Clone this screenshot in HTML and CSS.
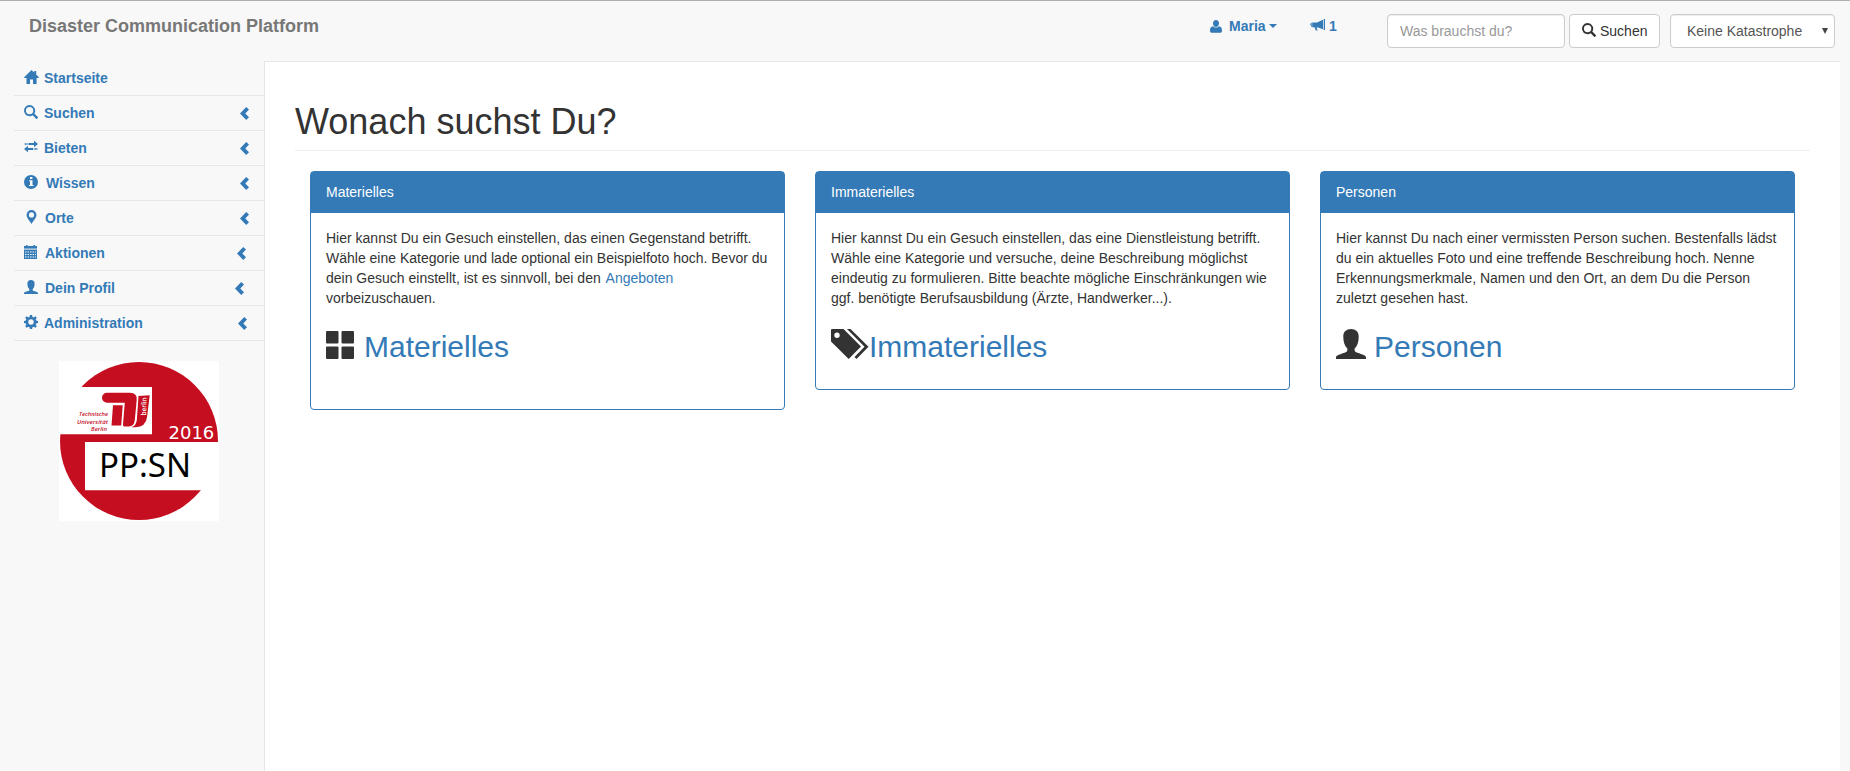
FILE: index.html
```html
<!DOCTYPE html>
<html lang="de">
<head>
<meta charset="utf-8">
<title>Disaster Communication Platform</title>
<link rel="stylesheet" href="styles.css">
</head>
<body>
<svg class="defs" aria-hidden="true">
<symbol id="search" viewBox="0 0 14 14"><path fill-rule="evenodd" d="M5.600 0a5.600 5.600 0 0 1 4.700 8.600l3.500 3.400c.3.300.3.600 0 .9l-.8.8c-.3.300-.6.300-.9 0L8.700 10.300A5.600 5.600 0 1 1 5.600 0zm0 1.900a3.700 3.700 0 1 0 0 7.400 3.700 3.700 0 0 0 0-7.400z"/></symbol>
<symbol id="user" viewBox="0 0 14 14"><path d="M7 0c2.200 0 3.600 1.300 3.600 3.500 0 2.300-.5 4.300-1.900 5.600v.8c0 .6.500.9 1.300 1.200 2.400.8 4 1.200 4 2.200v.7H0v-.7c0-1 1.600-1.400 4-2.200.8-.3 1.300-.6 1.300-1.200v-.8C3.900 7.800 3.400 5.800 3.400 3.500 3.400 1.300 4.800 0 7 0z"/></symbol>
<symbol id="left" viewBox="0 0 9 13"><path d="M6.200 0L9 2.600 5.300 6.400 9 10.200 6.200 13 0 6.400z"/></symbol>
</svg>
<header class="topbar">
  <a class="brand">Disaster Communication Platform</a>
  <div class="tools">
    <a class="account"><svg class="person" viewBox="0 0 12 13"><path d="M6 0c1.800 0 3 1.300 3 3.300S7.800 7 6 7 3 5.300 3 3.300 4.200 0 6 0zM3 6.200c.8.900 1.800 1.400 3 1.400s2.200-.5 3-1.400c2.100.1 3 2 3 4.500 0 1.300-.8 2.100-2 2.100H2c-1.200 0-2-.8-2-2.100 0-2.500.9-4.400 3-4.500z"/></svg><span>Maria</span><i class="caret"></i></a>
    <a class="alerts"><svg class="horn" viewBox="0 0 15 12"><path d="M13.700 0H15v11h-1.300zM13 .7v9.500L8 8.500H6.500l1.200 2.900H5.800L4.500 8.200H2.200V3.600H7zM1.100 3.700h.7V8h-.7zM0 4.500h.7v1.800H0z"/></svg><span>1</span></a>
    <input class="field" placeholder="Was brauchst du?">
    <button class="button"><svg class="icon"><use href="#search"/></svg><span>Suchen</span></button>
    <div class="select"><span>Keine Katastrophe</span><i class="arrow"></i></div>
  </div>
</header>
<div class="layout">
  <nav class="sidebar">
    <a class="item"><svg class="icon" viewBox="0 0 14 14"><path d="M7.500 0l2.700 2.500V1h2v3.400l2.600 2.900v.6h-2.200V14H9V9.500H6V14H2.500V7.900H.2v-.6z"/></svg><span>Startseite</span></a>
    <a class="item"><svg class="icon"><use href="#search"/></svg><span>Suchen</span><svg class="chevron"><use href="#left"/></svg></a>
    <a class="item"><svg class="icon" viewBox="0 0 14 14"><path d="M10 .8L14 4l-4 3.200V5.100H5V2.900h5zM.8 2.900h1v2.200h-1zm1.700 0h.7v2.200h-.7zm1.200 0h.8v2.200h-.8zM4 5.800v2.100h5v2.200H4v2.100L0 9zM9.700 7.900h.8v2.200h-.8zm1.300 0h.7v2.200H11zm1.300 0h1v2.200h-1z"/></svg><span>Bieten</span><svg class="chevron"><use href="#left"/></svg></a>
    <a class="item"><svg class="icon" viewBox="0 0 14 14"><path fill-rule="evenodd" d="M7 0a7 7 0 1 1 0 14A7 7 0 0 1 7 0zM6 2v2h2.400V2zM5 5.300v1h1v3.600H5V11h4.500V9.900h-1V5.300z"/></svg><span class="shift2">Wissen</span><svg class="chevron"><use href="#left"/></svg></a>
    <a class="item"><svg class="icon" viewBox="0 0 14 14"><path fill-rule="evenodd" d="M7.500 0a4.900 4.900 0 0 1 4.900 4.900C12.400 8 9.300 10.500 7.500 14 5.700 10.500 2.600 8 2.600 4.900A4.900 4.900 0 0 1 7.500 0zm0 2.300a2.600 2.600 0 1 0 0 5.200 2.600 2.600 0 0 0 0-5.200z"/></svg><span class="shift1">Orte</span><svg class="chevron"><use href="#left"/></svg></a>
    <a class="item"><svg class="icon" viewBox="0 0 14 14"><path d="M0 1h2V0h1.500v1h6V0H11v1h2v2.500H0z"/><path opacity=".4" d="M0 3.500h13V5H0z"/><path fill-rule="evenodd" d="M0 5h13v9H0zM1 6.500v1h1.600v-1zm2.500 0v1h1.600v-1zm2.500 0v1h1.600v-1zm2.500 0v1h1.600v-1zm2.500 0v1h1v-1zM1 9v1h1.600V9zm2.500 0v1h1.600V9zM6 9v1h1.600V9zm2.500 0v1h1.600V9zM11 9v1h1V9zM1 11.500v1h1.600v-1zm2.500 0v1h1.600v-1zm2.500 0v1h1.600v-1zm2.500 0v1h1.600v-1zm2.500 0v1h1v-1z"/></svg><span class="shift1">Aktionen</span><svg class="chevron back3"><use href="#left"/></svg></a>
    <a class="item"><svg class="icon"><use href="#user"/></svg><span class="shift1">Dein Profil</span><svg class="chevron back5"><use href="#left"/></svg></a>
    <a class="item"><svg class="icon" viewBox="0 0 14 14"><path fill-rule="evenodd" d="M5.900 0h2.200l.4 1.900 1.100.5L11.300 1.300l1.500 1.500-1.100 1.700.4 1.100 1.900.4v2.100l-1.900.4-.4 1.100 1.100 1.700-1.500 1.500-1.700-1.100-1.100.5L8.100 14H5.900l-.4-1.800-1.100-.5-1.700 1.100-1.500-1.500 1.100-1.700-.4-1.100L0 8.100V6l1.900-.4.4-1.100L1.200 2.800l1.500-1.500 1.700 1.100 1.100-.5zM7 4.300a2.700 2.700 0 1 0 0 5.400 2.700 2.700 0 0 0 0-5.400z"/></svg><span>Administration</span><svg class="chevron back2"><use href="#left"/></svg></a>
    <svg class="logo" viewBox="0 0 160 160">
      <path fill="#fff" d="M0 0h160v160H0z"/>
      <circle cx="80" cy="80" r="79" fill="#c50e1f"/>
      <path fill="#fff" d="M0 26h93v47.300H0zM26 81h134v48.300H26z"/>
      <g fill="#c50e1f">
        <path d="M48 31.700h23q7.500 0 6.700 7.500L75.800 59q-.6 6.500-6 6.500h-4.500q-1.500 0-1.300-2.500l1.800-21.300H48a5 5 0 0 1 0-10z"/>
        <path d="M54 44.200h9.700L62.200 64.500H52.500z"/>
        <path d="M79.500 35l11.200-.7-2.600 21.500q-1.200 10.400-11.800 10.400h-4q5-1.200 5.600-7.700z"/>
      </g>
      <g class="uni"><text x="20" y="55" textLength="29" lengthAdjust="spacingAndGlyphs">Technische</text><text x="18" y="62.500" textLength="31" lengthAdjust="spacingAndGlyphs">Universität</text><text x="32" y="70" textLength="16" lengthAdjust="spacingAndGlyphs">Berlin</text></g>
      <text class="town" transform="translate(87 54.500) rotate(-88)" textLength="18" lengthAdjust="spacingAndGlyphs">berlin</text>
      <text class="year" x="109.500" y="78">2016</text>
      <text class="course" x="40" y="115.500" textLength="92" lengthAdjust="spacingAndGlyphs">PP:SN</text>
    </svg>
  </nav>
  <main class="content">
    <h1 class="title">Wonach suchst Du?</h1>
    <div class="cards">
      <section class="card tall">
        <div class="card-head">Materielles</div>
        <div class="card-body"><p class="copy">Hier kannst Du ein Gesuch einstellen, das einen Gegenstand betrifft. Wähle eine Kategorie und lade optional ein Beispielfoto hoch. Bevor du dein Gesuch einstellt, ist es sinnvoll, bei den <a class="link inline">Angeboten</a> vorbeizuschauen.</p>
        <h2 class="action"><svg class="big grid-icon" viewBox="0 0 28 28"><path d="M1 0h10.500q1 0 1 1v10.500q0 1-1 1H1q-1 0-1-1V1q0-1 1-1zM16.500 0H27q1 0 1 1v10.500q0 1-1 1H16.500q-1 0-1-1V1q0-1 1-1zM1 15.500h10.500q1 0 1 1V27q0 1-1 1H1q-1 0-1-1V16.500q0-1 1-1zM16.500 15.500H27q1 0 1 1V27q0 1-1 1H16.500q-1 0-1-1V16.500q0-1 1-1z"/></svg><a class="link">Materielles</a></h2></div>
      </section>
      <section class="card">
        <div class="card-head">Immaterielles</div>
        <div class="card-body"><p class="copy">Hier kannst Du ein Gesuch einstellen, das eine Dienstleistung betrifft. Wähle eine Kategorie und versuche, deine Beschreibung möglichst eindeutig zu formulieren. Bitte beachte mögliche Einschränkungen wie ggf. benötigte Berufsausbildung (Ärzte, Handwerker...).</p>
        <h2 class="action"><svg class="big tags-icon" viewBox="0 0 38 30"><path fill-rule="evenodd" d="M1 0h11.500L30 17.500 17.700 30 0 12.500V1q0-1 1-1zm5 3.500a2.700 2.700 0 1 0 0 5.400 2.700 2.700 0 0 0 0-5.400zM16 0h3.500L37.500 17.700 25.500 30l-2-2 10-10.300z"/></svg><a class="link">Immaterielles</a></h2></div>
      </section>
      <section class="card">
        <div class="card-head">Personen</div>
        <div class="card-body"><p class="copy">Hier kannst Du nach einer vermissten Person suchen. Bestenfalls lädst du ein aktuelles Foto und eine treffende Beschreibung hoch. Nenne Erkennungsmerkmale, Namen und den Ort, an dem Du die Person zuletzt gesehen hast.</p>
        <h2 class="action"><svg class="big user-icon"><use href="#user"/></svg><a class="link">Personen</a></h2></div>
      </section>
    </div>
  </main>
</div>
</body>
</html>
```
FILE: styles.css
```css
* { box-sizing: border-box; }
body { margin: 0; height: 771px; overflow: hidden; background: #f8f8f8; border-top: 1px solid #afafaf; color: #333; font: 14px/20px "Liberation Sans", Arial, sans-serif; display: flex; flex-direction: column; }
svg { fill: currentColor; flex: none; }
.defs { display: none; }
.topbar { height: 60px; flex: none; display: flex; justify-content: space-between; padding: 0 15px 0 29px; }
.brand { color: #777; font-size: 18px; font-weight: bold; padding-top: 15px; }
.tools { display: flex; }
.account, .alerts { display: flex; align-items: center; height: 20px; margin-top: 15px; color: #337ab7; font-weight: bold; }
.account { width: 100px; }
.alerts { width: 77px; gap: 4px; }
.person { width: 12px; height: 13px; margin-right: 7px; }
.horn { width: 15px; height: 12px; margin-top: -2px; }
.caret { border: 4px solid transparent; border-top-color: #337ab7; border-bottom: 0; margin-left: 3px; }
.field, .button, .select { height: 34px; margin: 13px 0 0; border: 1px solid #ccc; border-radius: 4px; background: #fff; font: 14px/20px "Liberation Sans", Arial, sans-serif; }
.field { width: 178px; padding: 6px 12px; box-shadow: inset 0 1px 1px rgba(0,0,0,.075); }
.field::placeholder { color: #999; opacity: 1; }
.button { width: 91px; margin-left: 4px; padding: 0 0 0 12px; display: flex; align-items: center; gap: 4px; color: #333; }
.select { width: 165px; margin-left: 10px; padding: 0 6px 0 16px; display: flex; align-items: center; justify-content: space-between; color: #555; box-shadow: inset 0 1px 1px rgba(0,0,0,.075); }
.arrow { border: 3px solid transparent; border-top: 6px solid #444; border-bottom: 0; }
.layout { flex: 1; display: flex; padding-right: 10px; }
.sidebar { width: 250px; margin-left: 14px; color: #337ab7; font-weight: bold; }
.item { display: flex; align-items: center; height: 35px; padding: 0 15px 0 10px; border-bottom: 1px solid #e7e7e7; }
.icon { width: 14px; height: 14px; margin: -2px 6px 0 0; overflow: visible; }
.button .icon { margin-right: 0; }
.shift1 { margin-left: 1px; }
.shift2 { margin-left: 2px; }
.chevron { width: 9px; height: 13px; margin-left: auto; }
.back2 { margin-right: 2px; }
.back3 { margin-right: 3px; }
.back5 { margin-right: 5px; }
.logo { display: block; width: 160px; height: 160px; margin: 20px 0 0 45px; }
.uni { fill: #c50e1f; font: italic 600 6px "Open Sans", sans-serif; }
.town { fill: #fff; font: 600 7px "Open Sans", sans-serif; }
.year { fill: #fff; font: 18px "DejaVu Sans", sans-serif; }
.course { fill: #000; font: 33px "Noto Sans", sans-serif; }
.content { flex: 1; background: #fff; border: solid #e7e7e7; border-width: 1px 0 0 1px; padding: 40px 30px 0; }
.title { margin: 0; height: 49px; border-bottom: 1px solid #eee; font-size: 36px; font-weight: normal; line-height: 39px; }
.cards { display: grid; grid-template-columns: repeat(3, 475px); gap: 30px; align-items: start; padding: 20px 15px 0; }
.card { height: 219px; border: 1px solid #337ab7; border-radius: 4px; }
.tall { height: 239px; }
.card-head { height: 41px; padding: 10px 15px; background: #337ab7; color: #fff; }
.card-body { padding: 15px; }
.copy { margin: 0; }
.link { color: #337ab7; }
.inline { margin-left: 1px; }
.action { display: flex; margin: 20px 0 0; font-size: 30px; font-weight: normal; line-height: 33px; }
.action .link { padding-top: 2px; }
.grid-icon { width: 28px; height: 28px; margin: 3px 10px 0 0; }
.tags-icon { width: 38px; height: 30px; margin: 1px 0 0 0; }
.user-icon { width: 30px; height: 30px; margin: 1px 8px 0 0; }
```
